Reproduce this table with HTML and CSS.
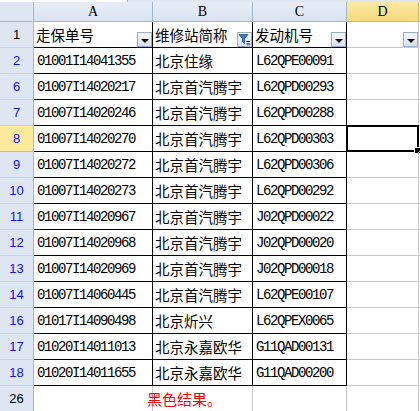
FILE: index.html
```html
<!DOCTYPE html>
<html>
<head>
<meta charset="utf-8">
<link rel="stylesheet" href="styles.css">
</head>
<body>
<div class="strip"><div class="namebox"></div><div class="fbar"></div></div>
<div class="sheet">
  <div class="corner"></div>
  <div class="ch">A</div>
  <div class="ch">B</div>
  <div class="ch">C</div>
  <div class="ch sel">D</div>
  <div class="ch last"></div>

  <div class="rh">1</div>
  <div class="c k hd"><span class="cn">走保单号</span><span class="fbtn"><i class="tri"></i></span></div>
  <div class="c k hd"><span class="cn">维修站简称</span><span class="fbtn"><svg width="13" height="13" viewBox="0 0 13 13"><path d="M1 1.5 H10 L6.6 5.5 V10.5 L4.4 9 V5.5 Z" fill="#3d74bd" stroke="#1f4f93" stroke-width="0.8"/><rect x="8.5" y="8" width="3.5" height="1" fill="#000"/><rect x="8.5" y="10.5" width="3.5" height="1" fill="#000"/></svg></span></div>
  <div class="c k hd"><span class="cn">发动机号</span><span class="fbtn"><i class="tri"></i></span></div>
  <div class="c hd end"><span class="fbtn"><i class="tri"></i></span></div>
  <div class="c"></div>

  <div class="rh blue">2</div><div class="c k m">01001I14041355</div><div class="c k z">北京住缘</div><div class="c k m">L62QPE00091</div><div class="c"></div><div class="c"></div>
  <div class="rh blue">6</div><div class="c k m">01007I14020217</div><div class="c k z">北京首汽腾宇</div><div class="c k m">L62QPD00293</div><div class="c"></div><div class="c"></div>
  <div class="rh blue">7</div><div class="c k m">01007I14020246</div><div class="c k z">北京首汽腾宇</div><div class="c k m">L62QPD00288</div><div class="c"></div><div class="c"></div>
  <div class="rh blue selrow">8</div><div class="c k m">01007I14020270</div><div class="c k z">北京首汽腾宇</div><div class="c k m">L62QPD00303</div><div class="c active"><span class="cursor"><span class="handle"></span></span></div><div class="c"></div>
  <div class="rh blue">9</div><div class="c k m">01007I14020272</div><div class="c k z">北京首汽腾宇</div><div class="c k m">L62QPD00306</div><div class="c"></div><div class="c"></div>
  <div class="rh blue">10</div><div class="c k m">01007I14020273</div><div class="c k z">北京首汽腾宇</div><div class="c k m">L62QPD00292</div><div class="c"></div><div class="c"></div>
  <div class="rh blue">11</div><div class="c k m">01007I14020967</div><div class="c k z">北京首汽腾宇</div><div class="c k m">J02QPD00022</div><div class="c"></div><div class="c"></div>
  <div class="rh blue">12</div><div class="c k m">01007I14020968</div><div class="c k z">北京首汽腾宇</div><div class="c k m">J02QPD00020</div><div class="c"></div><div class="c"></div>
  <div class="rh blue">13</div><div class="c k m">01007I14020969</div><div class="c k z">北京首汽腾宇</div><div class="c k m">J02QPD00018</div><div class="c"></div><div class="c"></div>
  <div class="rh blue">14</div><div class="c k m">01007I14060445</div><div class="c k z">北京首汽腾宇</div><div class="c k m">L62QPE00107</div><div class="c"></div><div class="c"></div>
  <div class="rh blue">16</div><div class="c k m">01017I14090498</div><div class="c k z">北京炘兴</div><div class="c k m">L62QPEX0065</div><div class="c"></div><div class="c"></div>
  <div class="rh blue">17</div><div class="c k m">01020I14011013</div><div class="c k z">北京永嘉欧华</div><div class="c k m">G11QAD00131</div><div class="c"></div><div class="c"></div>
  <div class="rh blue">18</div><div class="c k m">01020I14011655</div><div class="c k z">北京永嘉欧华</div><div class="c k m">G11QAD00200</div><div class="c"></div><div class="c"></div>

  <div class="rh">26</div><div class="c z red"><span class="note">黑色结果。</span></div><div class="c"></div><div class="c"></div><div class="c"></div><div class="c"></div>
</div>
</body>
</html>
```

FILE: styles.css
```css
html, body {
  margin: 0;
  padding: 0;
  background: #ffffff;
  overflow: hidden;
}
.strip {
  display: flex;
  height: 2px;
  background: #dfe7f1;
}
.namebox {
  width: 127px;
  background: #ffffff;
  border-right: 1px solid #a9b8cc;
}
.fbar {
  flex: 1;
}
.sheet {
  display: grid;
  grid-template-columns: 34px 119px 100px 94px 72px 1fr;
  grid-template-rows: 20px;
  grid-auto-rows: 26px;
  width: 420px;
}
.sheet > div {
  box-sizing: border-box;
}
.corner, .ch, .rh {
  background: #dde6f2;
  border-right: 1px solid #9eb6ce;
  border-bottom: 1px solid #9eb6ce;
}
.ch {
  display: flex;
  align-items: center;
  justify-content: center;
  font-family: "Liberation Serif", serif;
  font-size: 14px;
  color: #000;
  background: linear-gradient(#e6edf6, #d9e3f0);
}
.ch.sel {
  background: linear-gradient(#fbe9a4, #f6d878);
  border-right-color: #e0b95a;
  border-bottom-color: #e0b95a;
}
.ch.last {
  border-right: none;
}
.rh {
  display: flex;
  align-items: center;
  justify-content: center;
  font-family: "Liberation Sans", Arial, sans-serif;
  font-size: 13px;
  color: #000;
  border-bottom-color: #c7d5e5;
}
.rh.blue {
  color: #1010f0;
}
.rh.selrow {
  background: #fde99c;
  border-bottom-color: #e0b95a;
  border-right-color: #e0b95a;
}
.c {
  position: relative;
  display: flex;
  align-items: center;
  border-right: 1px solid #c8c8c8;
  border-bottom: 1px solid #c8c8c8;
  padding-left: 2px;
  white-space: nowrap;
  overflow: visible;
  color: #000;
}
.c.k {
  border-right-color: #000;
  border-bottom-color: #000;
}
.m {
  font-family: "Liberation Mono", "DejaVu Sans Mono", monospace;
  font-size: 14px;
  letter-spacing: -1.4px;
  padding-left: 3px;
}
.z, .hd {
  font-family: "Noto Sans CJK SC", sans-serif;
  font-size: 14.5px;
  font-weight: 400;
}
.hd {
  justify-content: space-between;
  padding-right: 0;
}
.hd.end {
  justify-content: flex-end;
}
.cn {
  align-self: center;
}
.fbtn {
  align-self: flex-end;
  width: 15px;
  height: 15px;
  box-sizing: border-box;
  border: 1px solid #97aed0;
  background: linear-gradient(#f6f9fd, #d6e2f1);
  display: flex;
  align-items: center;
  justify-content: center;
  margin-bottom: 0;
}
.tri {
  display: block;
  width: 0;
  height: 0;
  border-left: 4px solid transparent;
  border-right: 4px solid transparent;
  border-top: 4px solid #000;
  margin-top: 2px;
}
.red {
  color: #ff0000;
  font-size: 15px;
}
.note {
  padding-left: 111px;
}
.cursor {
  position: absolute;
  left: -1px;
  top: -1px;
  right: -1px;
  bottom: -1px;
  border: 2px solid #000;
}
.handle {
  position: absolute;
  right: -4px;
  bottom: -4px;
  width: 5px;
  height: 5px;
  background: #000;
  border: 1px solid #fff;
}
```
